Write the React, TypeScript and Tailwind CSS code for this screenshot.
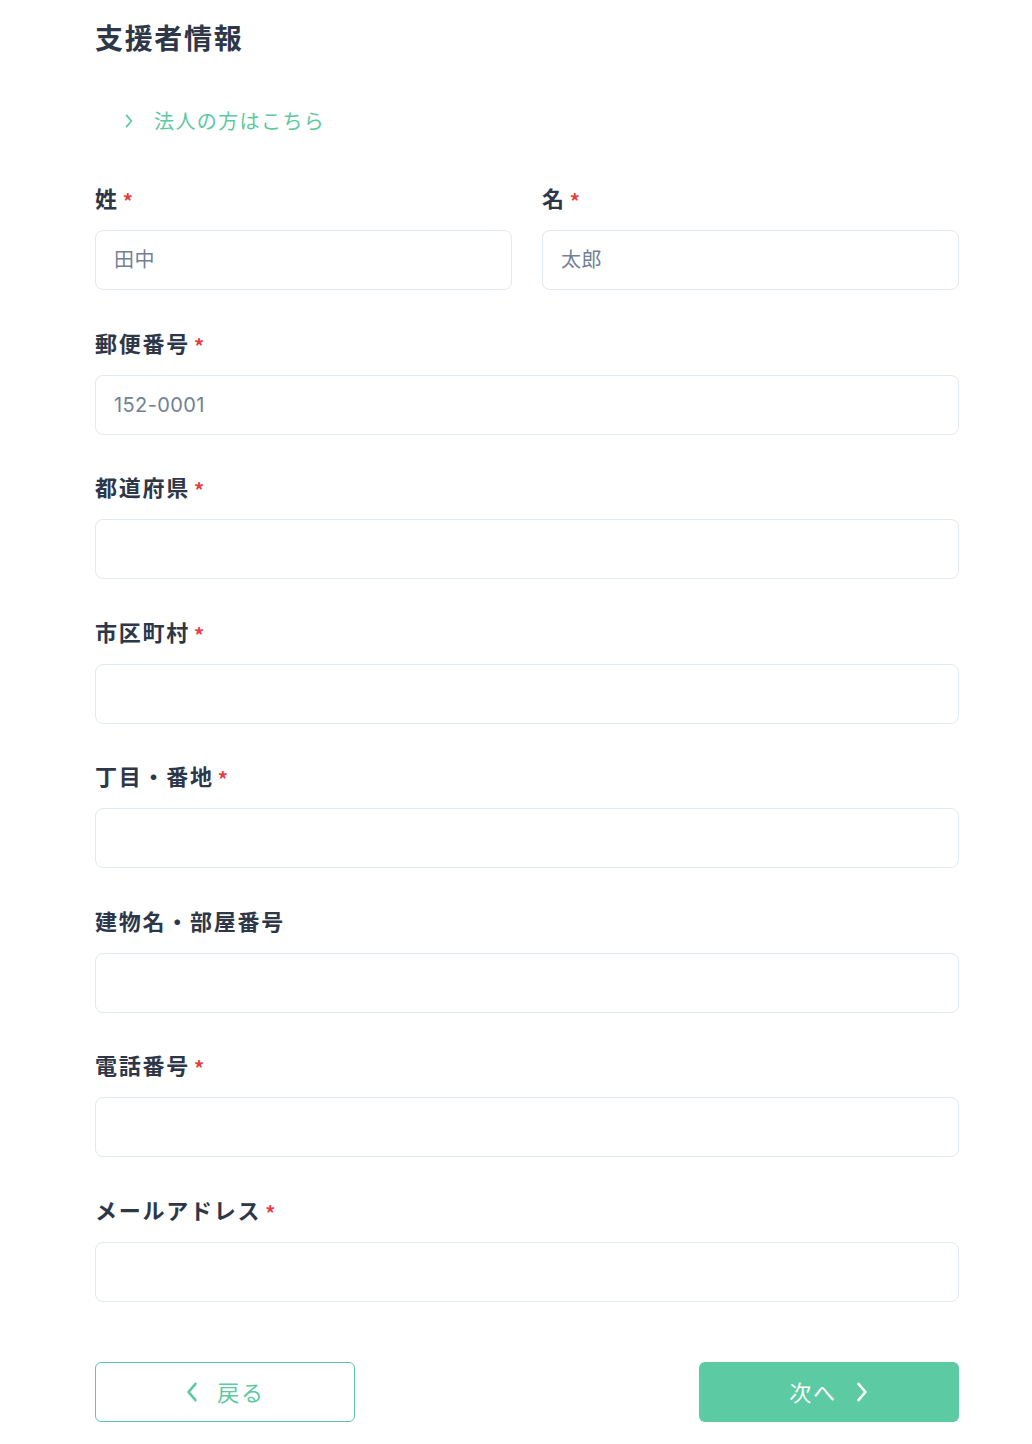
import React from "react";

const font = { fontFamily: '"Noto Sans CJK JP", "Noto Sans", sans-serif' };
const inputFont = { fontFamily: '"Inter", "Noto Sans CJK JP", sans-serif' };

function Chevron({ dir = "right", className = "", sw = 2 }: { dir?: "left" | "right"; className?: string; sw?: number }) {
  return (
    <svg viewBox="0 0 12 20" className={className} fill="none" stroke="currentColor" strokeWidth={sw} strokeLinecap="round" strokeLinejoin="round">
      {dir === "right" ? <path d="M3 3 L9 10 L3 17" /> : <path d="M9 3 L3 10 L9 17" />}
    </svg>
  );
}

function Label({ text, required = true }: { text: string; required?: boolean }) {
  return (
    <div className="relative -top-[3px] flex items-center h-[30px] text-[22px] font-bold leading-[30px] tracking-[0.08em] text-[#2d3748]">
      <span>{text}</span>
      {required && <span className="ml-[4px] text-[20px] font-bold text-[#e53e3e] relative top-[4px]">*</span>}
    </div>
  );
}

function Input({ placeholder = "" }: { placeholder?: string }) {
  return (
    <input
      placeholder={placeholder}
      className="mt-[15px] block w-full h-[60px] rounded-lg border border-[#e2e8f0] bg-white px-[18px] text-[20px] tracking-[0.02em] text-[#2d3748] placeholder:text-[#718096] outline-none"
      style={inputFont}
    />
  );
}

function Field({ label, placeholder, required = true }: { label: string; placeholder?: string; required?: boolean }) {
  return (
    <div>
      <Label text={label} required={required} />
      <Input placeholder={placeholder} />
    </div>
  );
}

export default function App() {
  return (
    <div className="min-h-[1444px] bg-white" style={font}>
      <div className="w-[864px] ml-[95px] pt-[17px] pb-[22px]">
        <h1 className="text-[28px] leading-[40px] font-bold text-[#2d3748] tracking-[0.06em]">支援者情報</h1>
        <div className="mt-[49px] flex items-center h-[30px] pl-[29px] text-[20px] leading-[30px] text-[#5cc9a0] tracking-[0.07em]">
          <Chevron className="w-[10px] h-[16px]" sw={2.2} />
          <span className="ml-[20px]">法人の方はこちら</span>
        </div>
        <div className="mt-[49px] flex flex-col gap-[39.55px]">
          <div className="grid grid-cols-2 gap-[30px]">
            <Field label="姓" placeholder="田中" />
            <Field label="名" placeholder="太郎" />
          </div>
          <Field label="郵便番号" placeholder="152-0001" />
          <Field label="都道府県" />
          <Field label="市区町村" />
          <Field label="丁目・番地" />
          <Field label="建物名・部屋番号" required={false} />
          <Field label="電話番号" />
          <Field label="メールアドレス" />
        </div>
        <div className="mt-[60px] flex justify-between">
          <button className="flex items-center justify-center w-[260px] h-[60px] rounded-md border border-[#5cc9a0] bg-white text-[#5cc9a0] text-[22px]">
            <Chevron dir="left" className="w-[14px] h-[24px]" sw={2.2} />
            <span className="ml-[18px] tracking-[0.08em]">戻る</span>
          </button>
          <button className="flex items-center justify-center w-[260px] h-[60px] rounded-md bg-[#5ccaa2] text-white text-[22px]">
            <span className="tracking-[0.08em]">次へ</span>
            <Chevron className="ml-[18px] w-[14px] h-[24px]" sw={2.2} />
          </button>
        </div>
      </div>
    </div>
  );
}
